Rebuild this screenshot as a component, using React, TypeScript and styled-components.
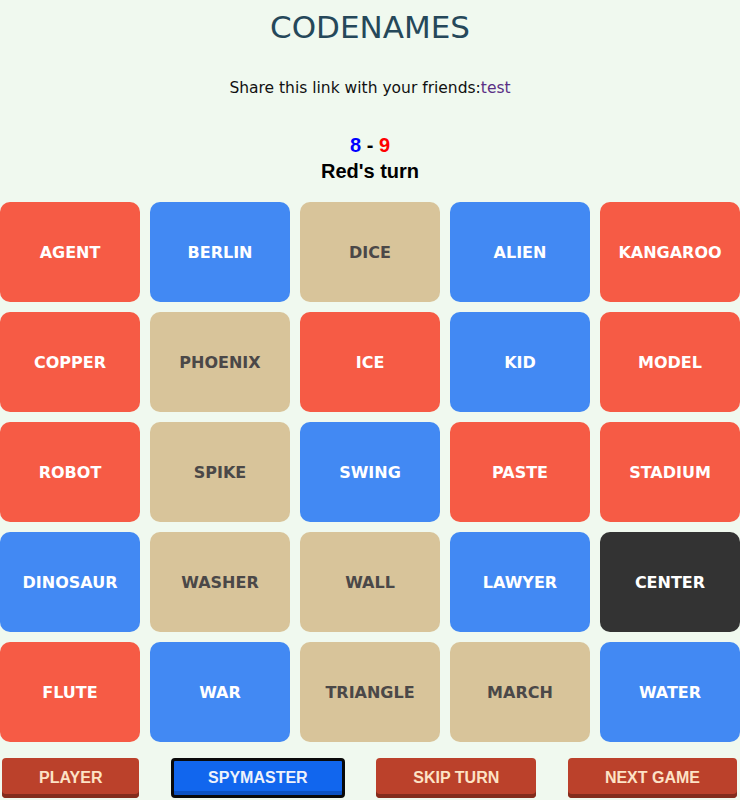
import React from "react";
import styled, { createGlobalStyle } from "styled-components";

const Global = createGlobalStyle`
  html, body { margin: 0; padding: 0; background: #f0f9ef; }
  body { font-family: "DejaVu Sans", Verdana, sans-serif; }
`;

type Kind = "red" | "blue" | "neutral" | "assassin";

const words: [string, Kind][] = [
  ["AGENT", "red"], ["BERLIN", "blue"], ["DICE", "neutral"], ["ALIEN", "blue"], ["KANGAROO", "red"],
  ["COPPER", "red"], ["PHOENIX", "neutral"], ["ICE", "red"], ["KID", "blue"], ["MODEL", "red"],
  ["ROBOT", "red"], ["SPIKE", "neutral"], ["SWING", "blue"], ["PASTE", "red"], ["STADIUM", "red"],
  ["DINOSAUR", "blue"], ["WASHER", "neutral"], ["WALL", "neutral"], ["LAWYER", "blue"], ["CENTER", "assassin"],
  ["FLUTE", "red"], ["WAR", "blue"], ["TRIANGLE", "neutral"], ["MARCH", "neutral"], ["WATER", "blue"],
];

const bg: Record<Kind, string> = {
  red: "#f65b45",
  blue: "#4289f3",
  neutral: "#d8c49a",
  assassin: "#333333",
};

const fg: Record<Kind, string> = {
  red: "#ffffff",
  blue: "#ffffff",
  neutral: "#4b4848",
  assassin: "#ffffff",
};

const Page = styled.div`
  display: flex;
  flex-direction: column;
  align-items: stretch;
`;

const Title = styled.h1`
  margin: 0;
  padding-top: 8px;
  font-family: "DejaVu Sans", sans-serif;
  font-weight: normal;
  font-size: 31px;
  line-height: 38px;
  color: #25485a;
  text-align: center;
`;

const Share = styled.p`
  margin: 32px 0 0;
  font-family: "DejaVu Sans", sans-serif;
  font-size: 15.5px;
  line-height: 20px;
  color: #111;
  text-align: center;
`;

const Link = styled.a`
  color: #5a2f85;
  text-decoration: none;
`;

const Score = styled.div`
  margin-top: 35px;
  font-family: "Liberation Sans", Arial, sans-serif;
  font-weight: bold;
  font-size: 20px;
  line-height: 24px;
  text-align: center;
  color: #000;
`;

const Team = styled.span<{ $c: string }>`
  color: ${(p) => p.$c};
`;

const Turn = styled.div`
  margin-top: 2px;
  font-family: "Liberation Sans", Arial, sans-serif;
  font-weight: bold;
  font-size: 20px;
  line-height: 24px;
  text-align: center;
  color: #000;
`;

const Board = styled.div`
  margin-top: 19px;
  display: grid;
  grid-template-columns: repeat(5, 140px);
  grid-auto-rows: 100px;
  gap: 10px;
`;

const Card = styled.div<{ $kind: Kind }>`
  background: ${(p) => bg[p.$kind]};
  color: ${(p) => fg[p.$kind]};
  border-radius: 10px;
  display: flex;
  align-items: center;
  justify-content: center;
  font-family: "DejaVu Sans", Verdana, sans-serif;
  font-weight: bold;
  font-size: 16px;
`;

const Controls = styled.div`
  margin-top: 16px;
  display: flex;
  justify-content: space-between;
  padding: 0 3px 0 2px;
`;

const Button = styled.button<{ $active?: boolean }>`
  height: 40px;
  padding: 0 34px 1px;
  border: 3px solid ${(p) => (p.$active ? "#0a0a0a" : "transparent")};
  border-radius: 4px;
  background: ${(p) => (p.$active ? "#1166ee" : "#bb412b")};
  box-shadow: inset 0 -4px 0 ${(p) => (p.$active ? "#0c52c4" : "#832c1c")};
  color: ${(p) => (p.$active ? "#eef2fb" : "#fde3c6")};
  font-family: "Liberation Sans", Arial, sans-serif;
  font-weight: bold;
  font-size: 16px;
  cursor: pointer;
  ${(p) => (p.$active ? "" : "border-width: 0; padding: 0 37px 1px;")}
`;

export default function App() {
  return (
    <Page>
      <Global />
      <Title>CODENAMES</Title>
      <Share>
        Share this link with your friends:<Link href="#">test</Link>
      </Share>
      <Score>
        <Team $c="#0000ff">8</Team> - <Team $c="#ff0000">9</Team>
      </Score>
      <Turn>Red's turn</Turn>
      <Board>
        {words.map(([w, k]) => (
          <Card key={w} $kind={k}>{w}</Card>
        ))}
      </Board>
      <Controls>
        <Button>PLAYER</Button>
        <Button $active>SPYMASTER</Button>
        <Button>SKIP TURN</Button>
        <Button>NEXT GAME</Button>
      </Controls>
    </Page>
  );
}
